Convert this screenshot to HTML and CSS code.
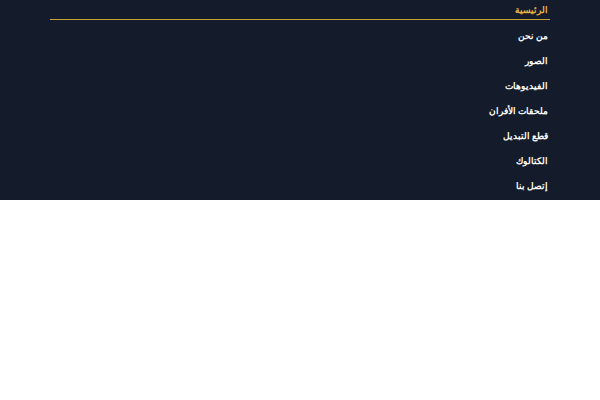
FILE: index.html
```html
<!DOCTYPE html>
<html lang="ar" dir="rtl">
<head>
<meta charset="utf-8">
<link rel="stylesheet" href="styles.css">
</head>
<body>
<nav class="menu">
  <ul class="menu-list">
    <li class="menu-item active"><a href="#">الرئيسية</a></li>
    <li class="menu-item"><a href="#">من نحن</a></li>
    <li class="menu-item"><a href="#">الصور</a></li>
    <li class="menu-item"><a href="#">الفيديوهات</a></li>
    <li class="menu-item"><a href="#">ملحقات الأفران</a></li>
    <li class="menu-item"><a href="#">قطع التبديل</a></li>
    <li class="menu-item"><a href="#">الكتالوك</a></li>
    <li class="menu-item"><a href="#">إتصل بنا</a></li>
  </ul>
</nav>
</body>
</html>
```
FILE: styles.css
```css
html, body {
  margin: 0;
  padding: 0;
  background: #ffffff;
}
.menu {
  background: #141c2b;
  height: 200px;
}
.menu-list {
  list-style: none;
  margin: 0 50px;
  padding: 0;
  direction: rtl;
}
.menu-item {
  padding-bottom: 6px;
}
.menu-item a {
  display: block;
  height: 18px;
  padding: 1px 2px 0 0;
  line-height: 18px;
  color: #ffffff;
  text-decoration: none;
  font-family: "Noto Sans", sans-serif;
  font-weight: bold;
  font-size: 8.5px;
}
.menu-item.active a {
  color: #eab443;
  border-bottom: 1px solid #c9a331;
}
```
